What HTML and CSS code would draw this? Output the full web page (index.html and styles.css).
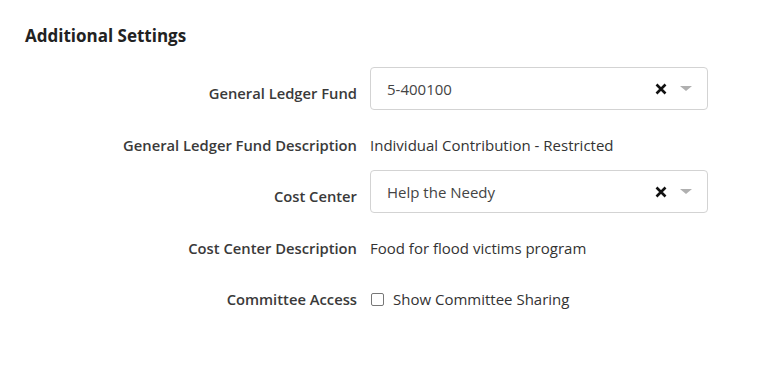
FILE: index.html
```html
<!DOCTYPE html>
<html>
<head>
<meta charset="utf-8">
<link rel="stylesheet" href="styles.css">
</head>
<body>
<div class="page">
  <h2 class="title">Additional Settings</h2>
  <div class="form">
    <div class="row">
      <label class="label">General Ledger Fund</label>
      <div class="select">
        <span class="select-value">5-400100</span>
        <svg class="select-clear" width="12" height="12" viewBox="0 0 12 12"><path d="M1.5 1.5 L10.5 10.5 M10.5 1.5 L1.5 10.5" stroke="#111" stroke-width="2.6" stroke-linecap="butt"/></svg>
        <span class="select-caret"></span>
      </div>
    </div>
    <div class="row">
      <label class="label">General Ledger Fund Description</label>
      <div class="value">Individual Contribution - Restricted</div>
    </div>
    <div class="row">
      <label class="label">Cost Center</label>
      <div class="select">
        <span class="select-value">Help the Needy</span>
        <svg class="select-clear" width="12" height="12" viewBox="0 0 12 12"><path d="M1.5 1.5 L10.5 10.5 M10.5 1.5 L1.5 10.5" stroke="#111" stroke-width="2.6" stroke-linecap="butt"/></svg>
        <span class="select-caret"></span>
      </div>
    </div>
    <div class="row">
      <label class="label">Cost Center Description</label>
      <div class="value">Food for flood victims program</div>
    </div>
    <div class="row">
      <label class="label">Committee Access</label>
      <div class="value check"><span class="box"></span>Show Committee Sharing</div>
    </div>
  </div>
</div>
</body>
</html>
```

FILE: styles.css
```css
html, body {
  margin: 0;
  padding: 0;
  background: #ffffff;
}
body {
  font-family: "Open Sans", "Noto Sans", sans-serif;
  color: #333333;
  font-size: 15px;
}
.page {
  padding: 25px 0 0 25px;
}
.title {
  margin: 0 0 20px 0;
  font-size: 17px;
  font-weight: 700;
  color: #222222;
  line-height: 22px;
}
.form {
  display: flex;
  flex-direction: column;
}
.row {
  display: grid;
  grid-template-columns: 332px 338px;
  column-gap: 13px;
  align-items: start;
  height: 43px;
  margin-bottom: 8.5px;
}
.label {
  text-align: right;
  font-weight: 600;
  font-size: 14.75px;
  color: #3a3a3a;
  line-height: 22px;
  padding-top: 15px;
}
.value {
  color: #333333;
  line-height: 22px;
  padding-top: 15px;
}
.select {
  height: 43px;
  box-sizing: border-box;
  border: 1px solid #d3d3d3;
  border-radius: 4px;
  display: flex;
  align-items: center;
  padding: 0 15px 0 16px;
}
.select-value {
  flex: 1;
  color: #444444;
}
.select-clear {
  margin-right: 13px;
  margin-top: 1px;
}
.select-caret {
  width: 0;
  height: 0;
  border-left: 6px solid transparent;
  border-right: 6px solid transparent;
  border-top: 5px solid #b0b0b0;
}
.check {
  display: flex;
  align-items: center;
}
.box {
  width: 11px;
  height: 11px;
  border: 1px solid #777777;
  border-radius: 2px;
  margin: 1px 9px 0 1px;
}
```
